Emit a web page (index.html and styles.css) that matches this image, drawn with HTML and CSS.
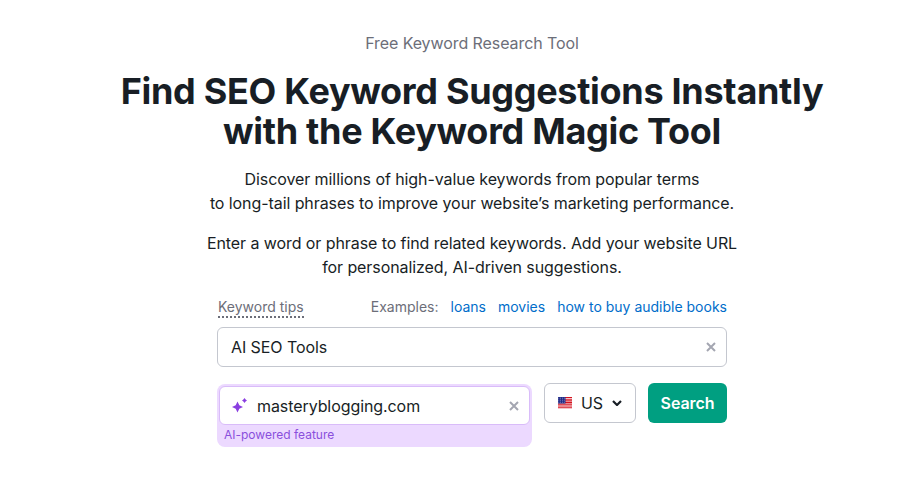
FILE: index.html
```html
<!DOCTYPE html>
<html lang="en">
<head>
<meta charset="utf-8">
<title>Keyword Magic Tool</title>
<link rel="stylesheet" href="styles.css">
</head>
<body>
<main class="hero">
  <p class="eyebrow">Free Keyword Research Tool</p>
  <h1 class="title">Find SEO Keyword Suggestions Instantly<br>with the Keyword Magic Tool</h1>
  <p class="lead">Discover millions of high-value keywords from popular terms<br>to long-tail phrases to improve your website’s marketing performance.</p>
  <p class="lead lead-second">Enter a word or phrase to find related keywords. Add your website URL<br>for personalized, AI-driven suggestions.</p>
  <form class="form">
    <div class="hints">
      <span class="tips">Keyword tips</span>
      <div class="examples">
        <span class="examples-label">Examples:</span>
        <a class="example" href="#">loans</a>
        <a class="example" href="#">movies</a>
        <a class="example" href="#">how to buy audible books</a>
      </div>
    </div>
    <div class="field field-keyword">
      <span class="field-text">AI SEO Tools</span>
      <svg class="clear" viewBox="0 0 10 10" width="10" height="10"><path d="M1 1l8 8M9 1l-8 8"/></svg>
    </div>
    <div class="row">
      <div class="ai-box">
        <div class="field field-ai">
          <svg class="sparkle" viewBox="0 0 16 16" width="16" height="16">
            <path d="M5.500 3.500L7.300 7.200 11 9 7.300 10.800 5.500 14.500 3.700 10.800 0 9 3.700 7.200z"/>
            <path d="M12.500 0L13.600 1.400 15 2.500 13.600 3.600 12.500 5 11.400 3.600 10 2.500 11.400 1.400z"/>
          </svg>
          <span class="field-text">masteryblogging.com</span>
          <svg class="clear" viewBox="0 0 10 10" width="10" height="10"><path d="M1 1l8 8M9 1l-8 8"/></svg>
        </div>
        <div class="ai-note">AI-powered feature</div>
      </div>
      <div class="country">
        <svg class="flag" viewBox="0 0 14 12" width="14" height="12">
          <rect width="14" height="12" fill="#fff"/>
          <path d="M0 .5h14M0 2.200h14M0 3.900h14M0 5.600h14M0 7.300h14M0 9h14M0 10.700h14" stroke="#d3121f" stroke-width="1.100"/>
          <rect width="7.500" height="6.500" fill="#1f2a86"/>
          <path d="M.5 1.200h6.500M.5 3.200h6.500M.5 5.200h6.500" stroke="#dfe3f5" stroke-width=".7" stroke-dasharray=".7 1.100"/>
        </svg>
        <span class="country-code">US</span>
        <svg class="chevron" viewBox="0 0 10 6" width="10" height="6"><path d="M1 1l4 4 4-4"/></svg>
      </div>
      <button class="search" type="button">Search</button>
    </div>
  </form>
</main>
</body>
</html>
```
FILE: styles.css
```css
* { box-sizing: border-box; }
html, body { margin: 0; padding: 0; background: #fff; }
body { font-family: Inter, "Liberation Sans", sans-serif; color: #181e25; overflow: hidden; height: 479px; letter-spacing: -0.005em; }
.hero { width: 944px; padding-top: 33px; text-align: center; }
.eyebrow { margin: 0; font-size: 16px; line-height: 20px; color: #6c6e79; }
.title { margin: 18px 0 0; font-size: 36px; line-height: 40px; font-weight: 700; letter-spacing: -0.3px; color: #181e25; }
.lead { margin: 16px 0 0; font-size: 16px; line-height: 24px; color: #181e25; }
.lead-second { margin-top: 16px; }
.form { width: 510px; margin: 18px auto 0; text-align: left; }
.hints { display: flex; justify-content: space-between; align-items: flex-start; height: 24px; margin-bottom: 6px; padding: 0 0 0 1px; font-size: 14px; line-height: 20px; letter-spacing: 0; }
.tips { color: #6c6e79; border-bottom: 2px dotted #6c6e79; height: 21px; }
.examples { display: flex; gap: 12px; }
.examples-label { color: #6c6e79; }
.example { color: #006dca; text-decoration: none; }
.field { display: flex; align-items: center; background: #fff; border: 1px solid #c4c7cf; border-radius: 6px; font-size: 16px; color: #181e25; }
.field-text { flex: 1; }
.field-keyword { height: 40px; padding: 0 10px 0 13px; }
.clear { fill: none; stroke: #a4a6b1; stroke-width: 2; }
.row { display: flex; align-items: flex-start; margin-top: 16px; }
.ai-box { width: 315px; margin-top: 1px; background: #ecd9ff; border-radius: 8px; padding: 2px 2px 0; height: 63px; }
.field-ai { height: 39px; border: 1px solid #d9bcf9; padding: 0 10px 0 12px; border-radius: 6px; gap: 9px; }
.ai-note { font-size: 12px; line-height: 16px; color: #8a4fdc; padding: 2px 0 0 5px; letter-spacing: 0; }
.sparkle { fill: #8a3fe0; flex: none; }
.country { display: flex; align-items: center; width: 92px; height: 40px; margin-left: 12px; padding-left: 13px; background: #fff; border: 1px solid #c4c7cf; border-radius: 6px; font-size: 16px; }
.flag { flex: none; }
.country-code { margin-left: 9px; }
.chevron { margin-left: 9px; fill: none; stroke: #181e25; stroke-width: 2.200; }
.search { width: 79px; height: 40px; margin-left: 12px; border: 0; border-radius: 6px; background: #009f81; color: #fff; font: 600 16px/20px Inter, "Liberation Sans", sans-serif; letter-spacing: -0.005em; padding: 0; }
```
